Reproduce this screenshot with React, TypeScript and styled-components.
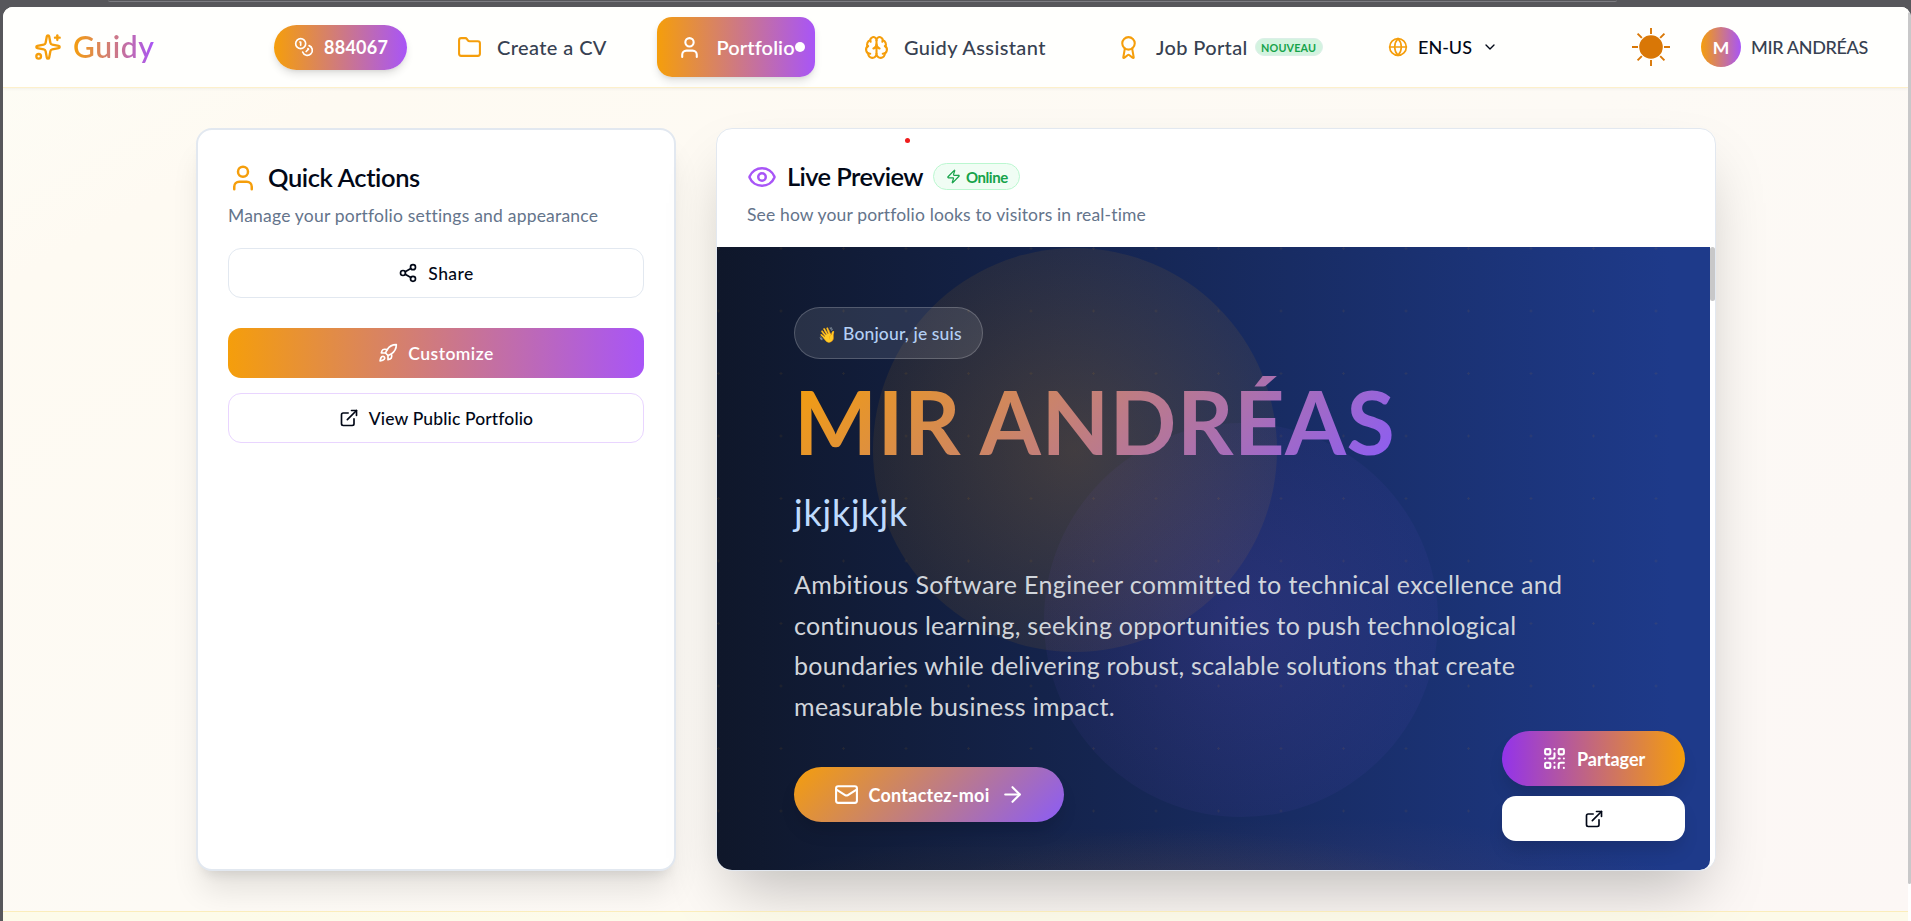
import React from "react";
import styled, { createGlobalStyle } from "styled-components";
import {
  ArrowRight,
  Award,
  Brain,
  ChevronDown,
  Coins,
  ExternalLink,
  Eye,
  Folder,
  Globe,
  Mail,
  QrCode,
  Rocket,
  Share2,
  Sparkles,
  User,
  Zap,
} from "lucide-react";

const AMBER = "#f59e0b";
const PURPLE = "#a855f7";
const BRAND = `linear-gradient(90deg, ${AMBER}, ${PURPLE})`;

const GlobalStyle = createGlobalStyle`
  *, *::before, *::after { box-sizing: border-box; }
  body {
    margin: 0;
    overflow: hidden;
    font-family: Lato, "Liberation Sans", sans-serif;
    font-variant-ligatures: none;
    color: #020817;
    background: #57575b;
  }
  button { font: inherit; color: inherit; cursor: pointer; }
  h1, h2, p { margin: 0; }
  svg { flex: none; display: block; }
`;

const Screen = styled.div`
  width: 1911px;
  height: 921px;
  overflow: hidden;
  background: #57575b;
`;

const BrowserBar = styled.div`
  height: 7px;
  padding: 0 294px 0 108px;
`;

const AddressEdge = styled.div`
  height: 2px;
  border-bottom: 1px solid #7c7c81;
  border-radius: 0 0 8px 8px;
`;

const Frame = styled.div`
  display: flex;
  height: 914px;
  margin-left: 3px;
  border-radius: 10px 10px 0 0;
  overflow: hidden;
  background: #fff;
`;

const Page = styled.div`
  flex: 1;
  display: flex;
  flex-direction: column;
  background: linear-gradient(150deg, #fdfdf6 0%, #fefaf2 14%, #fdfaf5 50%, #fcf8f5 80%, #fcf7f5 100%);
`;

const ScrollRail = styled.div`
  width: 3px;
  padding-top: 5px;
`;

const ScrollThumb = styled.div<{ $h: number }>`
  height: ${(p) => p.$h}px;
  border-radius: 3px;
  background: #c8c8c9;
`;

const Header = styled.header`
  flex: none;
  display: flex;
  align-items: center;
  height: 81px;
  padding-left: 31px;
  background: #fffffd;
  border-bottom: 1px solid #fdf0cb;
  box-shadow: 0 1px 3px rgba(0, 0, 0, 0.05);
`;

const Brand = styled.div`
  display: flex;
  align-items: center;
  gap: 11px;
  width: 130px;
  color: ${AMBER};
`;

const BrandName = styled.span`
  margin-top: -2px;
  font-size: 30px;
  font-weight: 600;
  line-height: 40px;
  letter-spacing: 0.6px;
  background: ${BRAND};
  background-clip: text;
  color: transparent;
`;

const Label = styled.span<{ $size: number; $weight?: number; $track?: number }>`
  font-size: ${(p) => p.$size}px;
  font-weight: ${(p) => p.$weight ?? 400};
  letter-spacing: ${(p) => p.$track ?? 0}px;
  white-space: nowrap;
`;

const CreditPill = styled.div`
  display: flex;
  align-items: center;
  gap: 10px;
  width: 133px;
  height: 45px;
  margin-left: 110px;
  padding-left: 20px;
  border-radius: 23px;
  color: #fff;
  background: ${BRAND};
  box-shadow: 0 5px 8px -1px rgba(0, 0, 0, 0.12), 0 2px 4px -2px rgba(0, 0, 0, 0.1);
`;

const NavItem = styled.a<{ $width: number; $before: number }>`
  display: flex;
  align-items: center;
  gap: 15px;
  width: ${(p) => p.$width}px;
  margin-left: ${(p) => p.$before}px;
  color: #374151;
  svg { color: ${AMBER}; }
`;

const ActiveNavItem = styled(NavItem)`
  position: relative;
  height: 60px;
  padding-left: 19.5px;
  border-radius: 15px;
  color: #fff;
  background: ${BRAND};
  box-shadow: 0 5px 8px -1px rgba(0, 0, 0, 0.12), 0 2px 4px -2px rgba(0, 0, 0, 0.1);
  svg { color: #fff; }
`;

const ActiveDot = styled.span`
  position: absolute;
  top: 25px;
  right: 10px;
  width: 10px;
  height: 10px;
  border-radius: 50%;
  background: #fff;
`;

const NewBadge = styled.span`
  display: flex;
  align-items: center;
  justify-content: center;
  width: 68px;
  height: 18px;
  margin-left: -8px;
  border-radius: 9px;
  border: 1px solid #dcefe8;
  background: #d3f3df;
  color: #16a34a;
  font-size: 10.8px;
  font-weight: 700;
  letter-spacing: 0.15px;
`;

const Language = styled.button`
  display: flex;
  align-items: center;
  gap: 10px;
  width: 110px;
  margin-left: 65px;
  padding: 0;
  border: 0;
  background: none;
  svg:first-child { color: ${AMBER}; }
`;

const ThemeButton = styled.button`
  margin-left: 133px;
  padding: 0;
  border: 0;
  background: none;
`;

const Account = styled.div`
  display: flex;
  align-items: center;
  gap: 10px;
  margin-left: 30px;
  color: #374151;
`;

const Avatar = styled.span`
  display: flex;
  align-items: center;
  justify-content: center;
  width: 40px;
  height: 40px;
  border-radius: 50%;
  background: ${BRAND};
  color: #fff;
  font-size: 17.5px;
  font-weight: 700;
`;

const Main = styled.main`
  flex: none;
  display: flex;
  gap: 40px;
  padding: 40px 0 40px 193px;
`;

const Card = styled.section`
  height: 743px;
  border-radius: 16px;
  background: #fff;
`;

const ActionsCard = styled(Card)`
  width: 480px;
  padding: 30px;
  border: 2px solid #e2e8f0;
  box-shadow: 0 25px 31px -6px rgba(0, 0, 0, 0.1), 0 10px 12px -7px rgba(0, 0, 0, 0.1);
`;

const PreviewCard = styled(Card)`
  display: flex;
  flex-direction: column;
  width: 1000px;
  border: 1px solid #e2e8f0;
  box-shadow: 0 31px 62px -15px rgba(0, 0, 0, 0.25);
  overflow: hidden;
`;

const PreviewHead = styled.div`
  position: relative;
  flex: none;
  height: 118px;
  padding: 30px;
`;

const RecordingDot = styled.span`
  position: absolute;
  left: 187.5px;
  top: 9px;
  width: 5px;
  height: 5px;
  border-radius: 50%;
  background: #ef1c1c;
`;

const TitleRow = styled.div<{ $icon: string }>`
  display: flex;
  align-items: center;
  gap: 10px;
  height: 36px;
  > svg { color: ${(p) => p.$icon}; }
`;

const Title = styled.h2<{ $track: number }>`
  margin-top: -2px;
  font-size: 25.5px;
  font-weight: 600;
  letter-spacing: ${(p) => p.$track}px;
`;

const Description = styled.p<{ $track: number }>`
  margin-top: 7px;
  font-size: 17.5px;
  line-height: 25px;
  letter-spacing: ${(p) => p.$track}px;
  color: #64748b;
`;

const OnlineBadge = styled.span`
  display: flex;
  align-items: center;
  gap: 5px;
  width: 87px;
  height: 27px;
  margin-top: -1px;
  padding-left: 12px;
  border: 1px solid #bbf7d0;
  border-radius: 14px;
  background: #f0fdf4;
  color: #16a34a;
`;

const ActionButton = styled.button<{ $top: number; $edge?: string }>`
  display: flex;
  align-items: center;
  justify-content: center;
  gap: 10px;
  width: 100%;
  height: 50px;
  margin-top: ${(p) => p.$top}px;
  padding: 0;
  border: ${(p) => (p.$edge ? `1px solid ${p.$edge}` : "0")};
  border-radius: 13px;
  color: ${(p) => (p.$edge ? "#020817" : "#fff")};
  background: ${(p) => (p.$edge ? "#fff" : BRAND)};
`;

const Viewport = styled.div`
  flex: 1;
  display: flex;
`;

const PreviewRail = styled.div`
  width: 5px;
  background: #fff;
`;

const Hero = styled.div`
  position: relative;
  flex: 1;
  padding: 60px 0 0 77px;
  overflow: hidden;
  border-radius: 0 0 10px 0;
  background:
    radial-gradient(circle at 1.5px 1.5px, rgba(245, 158, 11, 0.08) 1px, transparent 1.3px) 0 0 / 62.5px 62.5px,
    radial-gradient(430px 110px at 400px 690px, rgba(245, 158, 11, 0.13), transparent),
    radial-gradient(430px 120px at 600px 690px, rgba(205, 120, 110, 0.13), transparent),
    linear-gradient(90deg, #0f172a, #1e3a8a 96%);
`;

const Orb = styled.span<{ $x: number; $y: number; $d: number; $rgb: string; $core: number; $rim: number }>`
  position: absolute;
  left: ${(p) => p.$x}px;
  top: ${(p) => p.$y}px;
  width: ${(p) => p.$d}px;
  height: ${(p) => p.$d}px;
  border-radius: 50%;
  background: radial-gradient(
    circle closest-side,
    rgba(${(p) => p.$rgb}, ${(p) => p.$core}),
    rgba(${(p) => p.$rgb}, ${(p) => p.$rim})
  );
`;

const HeroBody = styled.div`
  position: relative;
  display: flex;
  flex-direction: column;
  align-items: flex-start;
`;

const Greeting = styled.div`
  display: flex;
  align-items: center;
  gap: 6px;
  width: 189px;
  height: 52px;
  padding-left: 23px;
  border: 1px solid rgba(255, 255, 255, 0.2);
  border-radius: 26px;
  background: rgba(255, 255, 255, 0.1);
  color: #b4d0f5;
`;

const Wave = styled.span`
  width: 19px;
  padding-top: 2px;
  font-size: 15px;
  line-height: 20px;
`;

const HeroName = styled.h1`
  margin-top: 17px;
  font-size: 88px;
  font-weight: 700;
  line-height: 90px;
  letter-spacing: 0.4px;
  white-space: nowrap;
  background: linear-gradient(135deg, ${AMBER}, #8b5cf6);
  background-clip: text;
  color: transparent;
`;

const HeroRole = styled.p`
  margin-top: 24px;
  font-size: 36px;
  line-height: 44px;
  letter-spacing: 0.8px;
  color: #bfdbfe;
`;

const HeroSummary = styled.p`
  display: flex;
  flex-direction: column;
  margin-top: 30px;
  line-height: 40.6px;
  color: #d1d5db;
`;

const ContactButton = styled.button`
  display: flex;
  align-items: center;
  gap: 10px;
  width: 270px;
  height: 55px;
  margin-top: 41px;
  padding: 0 0 0 39.5px;
  border: 0;
  border-radius: 28px;
  color: #fff;
  background: linear-gradient(135deg, ${AMBER}, #8b5cf6);
  box-shadow: 0 12px 18px -4px rgba(0, 0, 0, 0.15);
`;

const FloatingActions = styled.div`
  position: absolute;
  right: 25px;
  bottom: 29px;
  display: flex;
  flex-direction: column;
  gap: 10px;
  width: 183px;
`;

const ShareButton = styled.button`
  display: flex;
  align-items: center;
  gap: 10px;
  height: 55px;
  padding: 0 0 0 40px;
  border: 0;
  border-radius: 28px;
  color: #fff;
  background: linear-gradient(90deg, #9333ea, ${AMBER});
  box-shadow: 0 12px 18px -4px rgba(0, 0, 0, 0.15);
`;

const OpenButton = styled.button`
  display: flex;
  align-items: center;
  justify-content: center;
  height: 45px;
  padding: 0;
  border: 0;
  border-radius: 14px;
  background: #fff;
  box-shadow: 0 12px 18px -4px rgba(0, 0, 0, 0.15);
`;

const Footer = styled.footer`
  flex: 1;
  position: relative;
  border-top: 1px solid rgba(250, 226, 150, 0.55);
  background: rgba(254, 252, 225, 0.6);
`;

const Sun = () => (
  <svg width="40" height="40" viewBox="0 0 40 40" fill="none" stroke="#d97706" strokeWidth="1.9">
    <circle cx="20" cy="20" r="11.8" fill="#d97706" stroke="none" />
    {[0, 45, 90, 135, 180, 225, 270, 315].map((a) => (
      <path key={a} d="M20 7V1" transform={`rotate(${a} 20 20)`} />
    ))}
  </svg>
);

const SUMMARY: { text: string; track: number }[] = [
  { text: "Ambitious Software Engineer committed to technical excellence and", track: 0.37 },
  { text: "continuous learning, seeking opportunities to push technological", track: 0.28 },
  { text: "boundaries while delivering robust, scalable solutions that create", track: 0.24 },
  { text: "measurable business impact.", track: 0.35 },
];

export default function App() {
  return (
    <Screen>
      <GlobalStyle />
      <BrowserBar>
        <AddressEdge />
      </BrowserBar>
      <Frame>
        <Page>
          <Header>
            <Brand>
              <Sparkles size={28} />
              <BrandName>Guidy</BrandName>
            </Brand>
            <CreditPill>
              <Coins size={20} />
              <Label $size={18} $weight={700} $track={0.25}>884067</Label>
            </CreditPill>
            <NavItem $width={150} $before={50}>
              <Folder size={25} />
              <Label $size={20} $weight={500} $track={0.4}>Create a CV</Label>
            </NavItem>
            <ActiveNavItem $width={158} $before={50}>
              <User size={25} />
              <Label $size={20} $weight={600} $track={0.1}>Portfolio</Label>
              <ActiveDot />
            </ActiveNavItem>
            <NavItem $width={183} $before={49}>
              <Brain size={25} />
              <Label $size={20} $weight={500} $track={0.38}>Guidy Assistant</Label>
            </NavItem>
            <NavItem $width={207} $before={69}>
              <Award size={25} />
              <Label $size={20} $weight={500} $track={0.35}>Job Portal</Label>
              <NewBadge>NOUVEAU</NewBadge>
            </NavItem>
            <Language>
              <Globe size={20} />
              <Label $size={18} $weight={500}>EN-US</Label>
              <ChevronDown size={16} />
            </Language>
            <ThemeButton>
              <Sun />
            </ThemeButton>
            <Account>
              <Avatar>M</Avatar>
              <Label $size={18} $weight={500} $track={-0.34}>MIR ANDRÉAS</Label>
            </Account>
          </Header>
          <Main>
            <ActionsCard>
              <TitleRow $icon={AMBER}>
                <User size={30} />
                <Title $track={-0.4}>Quick Actions</Title>
              </TitleRow>
              <Description $track={0.21}>Manage your portfolio settings and appearance</Description>
              <ActionButton $top={20} $edge="#e2e8f0">
                <Share2 size={20} />
                <Label $size={17.5} $weight={500} $track={0.4}>Share</Label>
              </ActionButton>
              <ActionButton $top={30}>
                <Rocket size={20} />
                <Label $size={17.5} $weight={600} $track={0.45}>Customize</Label>
              </ActionButton>
              <ActionButton $top={15} $edge="#e9d5ff">
                <ExternalLink size={20} />
                <Label $size={17.5} $weight={500} $track={0.13}>View Public Portfolio</Label>
              </ActionButton>
            </ActionsCard>
            <PreviewCard>
              <PreviewHead>
                <RecordingDot />
                <TitleRow $icon={PURPLE}>
                  <Eye size={30} />
                  <Title $track={-0.6}>Live Preview</Title>
                  <OnlineBadge>
                    <Zap size={15} />
                    <Label $size={15} $weight={700} $track={-0.45}>Online</Label>
                  </OnlineBadge>
                </TitleRow>
                <Description $track={0.15}>See how your portfolio looks to visitors in real-time</Description>
              </PreviewHead>
              <Viewport>
                <Hero>
                  <Orb $x={156} $y={1} $d={404} $rgb="245, 158, 11" $core={0.2} $rim={0.08} />
                  <Orb $x={327} $y={176} $d={394} $rgb="139, 92, 246" $core={0.15} $rim={0.05} />
                  <HeroBody>
                    <Greeting>
                      <Wave>👋</Wave>
                      <Label $size={17.5} $weight={500} $track={0.15}>Bonjour, je suis</Label>
                    </Greeting>
                    <HeroName>MIR ANDRÉAS</HeroName>
                    <HeroRole>jkjkjkjk</HeroRole>
                    <HeroSummary>
                      {SUMMARY.map((line) => (
                        <Label key={line.text} $size={25} $track={line.track}>{line.text}</Label>
                      ))}
                    </HeroSummary>
                    <ContactButton>
                      <Mail size={25} />
                      <Label $size={18} $weight={700} $track={0.25}>Contactez-moi</Label>
                      <ArrowRight size={25} />
                    </ContactButton>
                  </HeroBody>
                  <FloatingActions>
                    <ShareButton>
                      <QrCode size={25} />
                      <Label $size={18} $weight={700}>Partager</Label>
                    </ShareButton>
                    <OpenButton>
                      <ExternalLink size={20} />
                    </OpenButton>
                  </FloatingActions>
                </Hero>
                <PreviewRail>
                  <ScrollThumb $h={54} />
                </PreviewRail>
              </Viewport>
            </PreviewCard>
          </Main>
          <Footer />
        </Page>
        <ScrollRail>
          <ScrollThumb $h={872} />
        </ScrollRail>
      </Frame>
    </Screen>
  );
}
